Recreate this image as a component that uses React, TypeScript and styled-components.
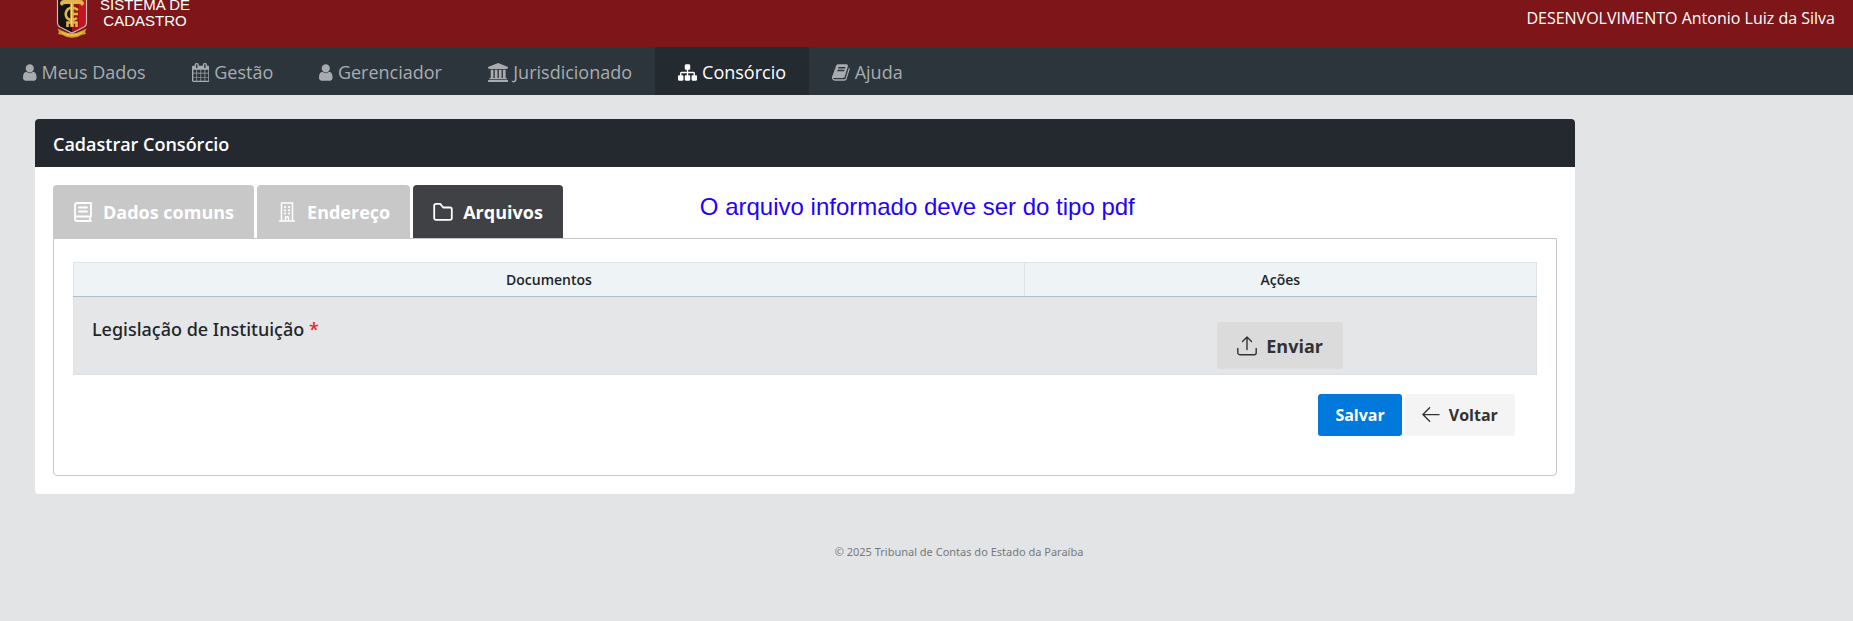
import React from "react";
import styled, { createGlobalStyle } from "styled-components";

const GlobalStyle = createGlobalStyle`
  *, *::before, *::after { box-sizing: border-box; }
  body {
    margin: 0;
    background: #e3e4e6;
    color: #212529;
    font-family: "Segoe UI", "Open Sans", "Noto Sans", sans-serif;
    font-size: 16px;
  }
  button { font-family: inherit; cursor: pointer; }
`;

const Header = styled.header`
  display: flex;
  justify-content: space-between;
  align-items: flex-end;
  height: 47px;
  padding: 0 18px 0 56px;
  overflow: hidden;
  background: #7e1518;
  color: #fff;
`;

const Brand = styled.a`
  display: flex;
  align-items: flex-end;
  gap: 12px;
  padding-bottom: 8px;
  color: #fff;
  text-decoration: none;
`;

const BrandName = styled.span`
  padding-bottom: 10px;
  font-family: Arial, "Liberation Sans", sans-serif;
  font-size: 15px;
  line-height: 16px;
  text-align: center;
`;

const UserName = styled.span`
  padding-bottom: 18px;
  font-size: 16px;
  line-height: 22px;
`;

const Nav = styled.nav`
  display: flex;
  height: 48px;
  background: #2d353c;
`;

const NavLink = styled.a<{ $active?: boolean }>`
  display: flex;
  align-items: center;
  gap: 5px;
  padding: 2px 23px 0;
  font-size: 18px;
  line-height: 26px;
  text-decoration: none;
  color: ${(p) => (p.$active ? "#fff" : "#a8acb1")};
  background: ${(p) => (p.$active ? "#232a30" : "transparent")};
  svg { height: 19px; flex: none; }
`;

const Main = styled.main`
  padding: 24px 0 0 35px;
`;

const Card = styled.section`
  width: 84.7%;
  border-radius: 4px;
  background: #fff;
  overflow: hidden;
`;

const CardTitle = styled.h1`
  margin: 0;
  padding: 13px 18px 11px;
  background: #242930;
  color: #fff;
  font-size: 18px;
  font-weight: 600;
  line-height: 24px;
`;

const CardBody = styled.div`
  padding: 18px;
`;

const TabBar = styled.div`
  display: flex;
  gap: 3px;
`;

const Tab = styled.button<{ $active?: boolean }>`
  display: flex;
  align-items: center;
  gap: 10px;
  height: 53px;
  padding: 0 20px;
  border: 0;
  border-radius: 4px 4px 0 0;
  background: ${(p) => (p.$active ? "#404144" : "#c8c8c8")};
  color: #fff;
  font-size: 18px;
  font-weight: 700;
  line-height: 24px;
`;

const Notice = styled.p`
  margin: 0 0 0 134px;
  padding-top: 8px;
  color: #2400ff;
  font-family: Arial, "Liberation Sans", sans-serif;
  font-size: 24px;
  line-height: 28px;
`;

const Panel = styled.div`
  padding: 23px 19px 39px;
  border: 1px solid #c8c8c8;
  border-radius: 0 0 4px 4px;
`;

const Table = styled.table`
  width: 100%;
  border-collapse: collapse;
  table-layout: fixed;
`;

const Th = styled.th<{ $width: string }>`
  width: ${(p) => p.$width};
  height: 34px;
  padding: 0;
  border: 1px solid #dee3e8;
  border-bottom-color: #b0bec8;
  background: #eef3f6;
  font-size: 14px;
  font-weight: 600;
`;

const Row = styled.tr`
  height: 78px;
  border: 1px solid #dbe1e6;
  background: #e5e6e8;
`;

const Cell = styled.td<{ $center?: boolean }>`
  padding: ${(p) => (p.$center ? "25px 0 5px" : "20px 18px")};
  vertical-align: top;
  text-align: ${(p) => (p.$center ? "center" : "left")};
  font-family: "Segoe UI", "Noto Sans", sans-serif;
  font-size: 18px;
  font-weight: 500;
  line-height: 24px;
`;

const Required = styled.span`
  color: #f01e28;
`;

const Button = styled.button<{ $kind: "upload" | "primary" | "plain" }>`
  display: inline-flex;
  align-items: center;
  gap: 9px;
  font-family: "Segoe UI", "Open Sans", sans-serif;
  height: ${(p) => (p.$kind === "upload" ? "47px" : "42px")};
  padding: ${(p) => (p.$kind === "upload" ? "0 20px" : "0 17px")};
  border: 0;
  border-radius: 3px;
  background: ${(p) =>
    ({ upload: "#dbdbdb", primary: "#0078dc", plain: "#f4f4f4" })[p.$kind]};
  color: ${(p) => (p.$kind === "primary" ? "#fff" : "#323232")};
  font-size: ${(p) => (p.$kind === "upload" ? "18px" : "16px")};
  font-weight: 700;
`;

const UploadSlot = styled.div`
  display: flex;
  justify-content: center;
`;

const Actions = styled.div`
  display: flex;
  justify-content: flex-end;
  gap: 3px;
  padding: 19px 22px 0 0;
`;

const Footer = styled.footer`
  padding: 48px 0 48px 65px;
  color: #76797c;
  font-family: "Segoe UI", "Noto Sans", sans-serif;
  font-size: 11px;
  line-height: 20px;
  text-align: center;
`;

const Glyph = ({ box, d }: { box: string; d: string }) => (
  <svg viewBox={box} fill="currentColor" aria-hidden="true">
    <path d={d} />
  </svg>
);

const userPath =
  "M1536 1399q0 109-62.5 187t-150.5 78h-854q-88 0-150.5-78t-62.5-187q0-85 8.5-160.5t31.5-152 58.5-131 94-89 134.5-34.5q131 128 313 128t313-128q76 0 134.5 34.5t94 89 58.5 131 31.5 152 8.5 160.5zm-256-887q0 159-112.5 271.5t-271.5 112.5-271.5-112.5-112.5-271.5 112.5-271.5 271.5-112.5 271.5 112.5 112.5 271.5z";
const calendarPath =
  "M192 1664h288v-288h-288v288zm352 0h320v-288h-320v288zm-352-352h288v-320h-288v320zm352 0h320v-320h-320v320zm-352-384h288v-288h-288v288zm736 736h320v-288h-320v288zm-384-736h320v-288h-320v288zm768 736h288v-288h-288v288zm-384-352h320v-320h-320v320zm-352-864v-288q0-13-9.5-22.5t-22.5-9.5h-64q-13 0-22.5 9.5t-9.5 22.5v288q0 13 9.5 22.5t22.5 9.5h64q13 0 22.5-9.5t9.5-22.5zm736 864h288v-320h-288v320zm-384-384h320v-288h-320v288zm384 0h288v-288h-288v288zm32-480v-288q0-13-9.5-22.5t-22.5-9.5h-64q-13 0-22.5 9.5t-9.5 22.5v288q0 13 9.5 22.5t22.5 9.5h64q13 0 22.5-9.5t9.5-22.5zm384-64v1280q0 52-38 90t-90 38h-1408q-52 0-90-38t-38-90v-1280q0-52 38-90t90-38h128v-96q0-66 47-113t113-47h64q66 0 113 47t47 113v96h384v-96q0-66 47-113t113-47h64q66 0 113 47t47 113v96h128q52 0 90 38t38 90z";
const institutionPath =
  "M960 0l960 384v128h-128q0 26-20.5 45t-48.5 19h-1526q-28 0-48.5-19t-20.5-45h-128v-128zm-704 640h256v768h128v-768h256v768h128v-768h256v768h128v-768h256v768h59q28 0 48.5 19t20.5 45v64h-1664v-64q0-26 20.5-45t48.5-19h59v-768zm1595 960q28 0 48.5 19t20.5 45v128h-1920v-128q0-26 20.5-45t48.5-19h1782z";
const sitemapPath =
  "M1792 1248v320q0 40-28 68t-68 28h-320q-40 0-68-28t-28-68v-320q0-40 28-68t68-28h96v-192h-512v192h96q40 0 68 28t28 68v320q0 40-28 68t-68 28h-320q-40 0-68-28t-28-68v-320q0-40 28-68t68-28h96v-192h-512v192h96q40 0 68 28t28 68v320q0 40-28 68t-68 28h-320q-40 0-68-28t-28-68v-320q0-40 28-68t68-28h96v-192q0-52 38-90t90-38h512v-192h-96q-40 0-68-28t-28-68v-320q0-40 28-68t68-28h320q40 0 68 28t28 68v320q0 40-28 68t-68 28h-96v192h512q52 0 90 38t38 90v192h96q40 0 68 28t28 68z";
const bookPath =
  "M1703 478q40 57 18 129l-275 906q-19 64-76.5 107.5t-122.5 43.5h-923q-77 0-148.5-53.5t-99.5-131.5q-24-67-2-127 0-4 3-27t4-37q1-8-3-21.5t-3-19.5q2-11 8-21t16.5-23.5 16.5-23.5q23-38 45-91.5t30-91.5q3-10 .5-30t-.5-28q3-11 17-28t17-23q21-36 42-92t25-90q1-9-2.5-32t.5-28q4-13 22-30.5t22-22.5q19-26 42.5-84.5t27.5-96.5q1-8-3-25.5t-2-26.5q2-8 9-18t18-23 17-21q8-12 16.5-30.5t15-35 16-36 19.5-32 26.5-23.5 36-11.5 47.5 5.5l-1 3q38-9 51-9h761q74 0 114 56t18 130l-274 906q-36 119-71.5 153.5t-128.5 34.5h-869q-27 0-38 15-11 16-1 43 24 70 144 70h923q29 0 56-15.5t35-41.5l300-987q7-22 5-57 38 15 59 43zm-1064 2q-4 13 2 22.5t20 9.5h608q13 0 25.5-9.5t16.5-22.5l21-64q4-13-2-22.5t-20-9.5h-608q-13 0-25.5 9.5t-16.5 22.5zm-83 256q-4 13 2 22.5t20 9.5h608q13 0 25.5-9.5t16.5-22.5l21-64q4-13-2-22.5t-20-9.5h-608q-13 0-25.5 9.5t-16.5 22.5z";

const navItems = [
  { label: "Meus Dados", box: "256 0 1280 1792", d: userPath },
  { label: "Gestão", box: "64 0 1664 1792", d: calendarPath },
  { label: "Gerenciador", box: "256 0 1280 1792", d: userPath },
  { label: "Jurisdicionado", box: "0 0 1920 1792", d: institutionPath },
  { label: "Consórcio", box: "0 0 1792 1792", d: sitemapPath, active: true },
  { label: "Ajuda", box: "64 0 1664 1792", d: bookPath },
];

const LineIcon = ({
  size = 20,
  weight = 1.8,
  children,
}: {
  size?: number;
  weight?: number;
  children: React.ReactNode;
}) => (
  <svg
    width={size}
    height={size}
    viewBox="0 0 20 20"
    fill="none"
    stroke="currentColor"
    strokeWidth={weight}
    strokeLinecap="round"
    strokeLinejoin="round"
    aria-hidden="true"
  >
    {children}
  </svg>
);

const BookIcon = () => (
  <LineIcon>
    <path d="M18 14.500V1H4a2 2 0 0 0-2 2v14a2 2 0 0 0 2 2h14M2 16.500a2 2 0 0 1 2-2h14M17 14.500V19M6 5.500h8M6 9.500h8" />
  </LineIcon>
);

const BuildingIcon = () => (
  <LineIcon weight={1.5}>
    <path d="M4.500 19V1h11v18M2.500 19h15M8.500 18.500V15h3v3.500" />
    <path d="M8 5h.1M12 5h.1M8 8.300h.1M12 8.300h.1M8 11.500h.1M12 11.500h.1" strokeWidth="2.200" />
  </LineIcon>
);

const FolderIcon = () => (
  <LineIcon>
    <path d="M1.200 3.700a1.800 1.800 0 0 1 1.800-1.800h4.200l3 3.600h6.800a1.800 1.800 0 0 1 1.800 1.800v8.800a1.800 1.800 0 0 1-1.800 1.800H3a1.800 1.800 0 0 1-1.800-1.800z" />
  </LineIcon>
);

const UploadIcon = () => (
  <LineIcon weight={1.4}>
    <path d="M10 13.500V1M5.500 5.500L10 1 14.500 5.500M.8 12.500v4.200a2 2 0 0 0 2 2h14.400a2 2 0 0 0 2-2v-4.200" />
  </LineIcon>
);

const ArrowLeftIcon = () => (
  <LineIcon size={18} weight={1.5}>
    <path d="M19 9.500H1M8.500 2L1 9.500 8.500 17" />
  </LineIcon>
);

const Crest = () => (
  <svg width="32" height="50" viewBox="0 0 32 50" aria-hidden="true">
    <path d="M1.500 0H16v44L4 38q-2.500-1.500-2.500-4z" fill="#161313" />
    <path d="M16 0h14.500v34q0 2.500-2.500 4L16 44z" fill="#c3141f" />
    <path d="M16 0h7v40l-7 4z" fill="#9c1219" />
    <path d="M1.500 0v34q0 2.500 2.500 4L16 44l12-6q2.500-1.500 2.500-4V0" fill="none" stroke="#c9b9b4" strokeWidth="1.200" />
    <path d="M4 15q0-4 4-4h16q4 0 4 4l-2 2q-1-2-3-2H9q-2 0-3 2z" fill="#e3b64a" />
    <g fill="none" stroke="#e3b64a">
      <path d="M16 12v26" strokeWidth="3.500" />
      <path d="M22 21q-5-4-10-1-4 4-1 9 4 4 10 0M15 25h7M11.500 38v-4.500h9V38" strokeWidth="2.600" />
    </g>
    <path d="M15.500 14v22" stroke="#f6e29a" strokeWidth=".8" />
    <path d="M1.500 39.500l4 2q10.500 5.500 21 0l4-2-1.500 3.500 1 2-4 .7Q16 52 6 45.700l-4-.7 1-2z" fill="#d5a32d" />
    <path d="M6 43.700q10 5 20 0" fill="none" stroke="#f0cf67" />
  </svg>
);

export default function App() {
  return (
    <>
      <GlobalStyle />
      <Header>
        <Brand href="#">
          <Crest />
          <BrandName>
            SISTEMA DE
            <br />
            CADASTRO
          </BrandName>
        </Brand>
        <UserName>DESENVOLVIMENTO Antonio Luiz da Silva</UserName>
      </Header>
      <Nav>
        {navItems.map((item) => (
          <NavLink key={item.label} href="#" $active={item.active}>
            <Glyph box={item.box} d={item.d} />
            {item.label}
          </NavLink>
        ))}
      </Nav>
      <Main>
        <Card>
          <CardTitle>Cadastrar Consórcio</CardTitle>
          <CardBody>
            <TabBar>
              <Tab type="button">
                <BookIcon />
                Dados comuns
              </Tab>
              <Tab type="button">
                <BuildingIcon />
                Endereço
              </Tab>
              <Tab type="button" $active>
                <FolderIcon />
                Arquivos
              </Tab>
              <Notice>O arquivo informado deve ser do tipo pdf</Notice>
            </TabBar>
            <Panel>
              <Table>
                <thead>
                  <tr>
                    <Th scope="col" $width="65%">Documentos</Th>
                    <Th scope="col" $width="35%">Ações</Th>
                  </tr>
                </thead>
                <tbody>
                  <Row>
                    <Cell>
                      Legislação de Instituição <Required>*</Required>
                    </Cell>
                    <Cell $center>
                      <UploadSlot>
                        <Button type="button" $kind="upload">
                          <UploadIcon />
                          Enviar
                        </Button>
                      </UploadSlot>
                    </Cell>
                  </Row>
                </tbody>
              </Table>
              <Actions>
                <Button type="button" $kind="primary">Salvar</Button>
                <Button type="button" $kind="plain">
                  <ArrowLeftIcon />
                  Voltar
                </Button>
              </Actions>
            </Panel>
          </CardBody>
        </Card>
      </Main>
      <Footer>© 2025 Tribunal de Contas do Estado da Paraíba</Footer>
    </>
  );
}
